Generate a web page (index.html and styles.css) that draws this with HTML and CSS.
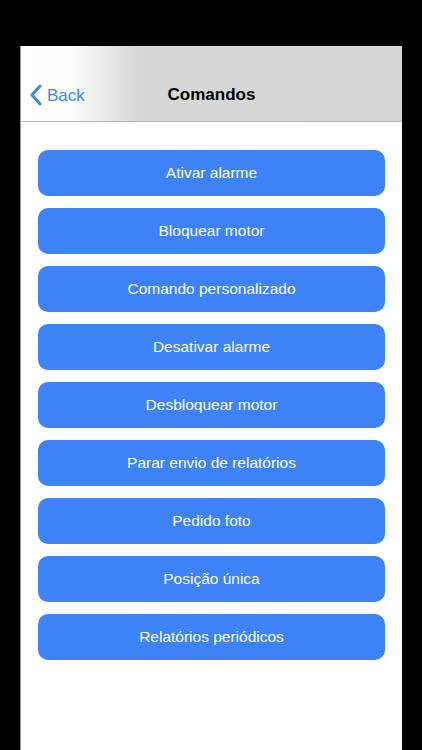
FILE: index.html
```html
<!DOCTYPE html>
<html lang="pt">
  <head>
    <meta charset="UTF-8" />
    <meta name="viewport" content="width=device-width, initial-scale=1.0" />
    <title>Comandos</title>
    <link rel="stylesheet" href="styles.css">
  </head>
  <body>
    <div class="screen">
      <div class="header">
        <div class="nav">
          <a class="back" href="#">
            <svg width="12" height="22" viewBox="0 0 12 22">
              <path d="M10 2 L2 11 L10 20" fill="none" stroke="#3f86f2" stroke-width="3" stroke-linecap="round" stroke-linejoin="round" />
            </svg>
            <span>Back</span>
          </a>
          <h1>Comandos</h1>
        </div>
      </div>
      <div class="commands">
        <button>Ativar alarme</button>
        <button>Bloquear motor</button>
        <button>Comando personalizado</button>
        <button>Desativar alarme</button>
        <button>Desbloquear motor</button>
        <button>Parar envio de relatórios</button>
        <button>Pedido foto</button>
        <button>Posição única</button>
        <button>Relatórios periódicos</button>
      </div>
    </div>
  </body>
</html>
```

FILE: styles.css
```css
body {
  font-family: Arial, "Liberation Sans", sans-serif;
  margin: 0;
  padding: 0;
  background-color: #000;
  height: 750px;
  overflow: hidden;
}
.screen {
  margin: 46px 20px 0 20px;
  height: 704px;
  background: #fff;
  border-left: 1px solid #9a9a9a;
  box-sizing: border-box;
}
.header {
  height: 76px;
  background: linear-gradient(to right, #fff 0px, #fdfdfd 50px, #e6e6e6 90px, #d7d7d7 118px, #d5d5d5 100%);
  border-bottom: 1px solid #b9b9b9;
  box-sizing: border-box;
  padding-top: 31px;
}
.nav {
  position: relative;
  height: 36px;
  display: flex;
  align-items: center;
  justify-content: center;
}
.back {
  position: absolute;
  left: 9px;
  top: 0;
  height: 36px;
  display: flex;
  align-items: center;
  gap: 5px;
  color: #3f86f2;
  text-decoration: none;
  font-size: 17px;
}
.back span {
  margin-top: 1px;
}
h1 {
  margin: 0;
  font-size: 17px;
  font-weight: bold;
  color: #000;
}
.commands {
  display: flex;
  flex-direction: column;
  gap: 12px;
  padding: 28px 17px 0 17px;
}
button {
  height: 46px;
  border: none;
  border-radius: 10px;
  background-color: #3d83f7;
  color: #fff;
  font-family: Arial, "Liberation Sans", sans-serif;
  font-size: 15.5px;
  cursor: pointer;
}
```
